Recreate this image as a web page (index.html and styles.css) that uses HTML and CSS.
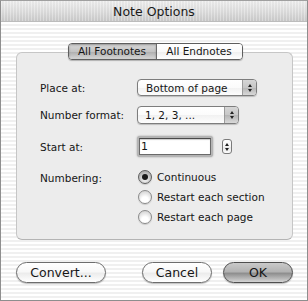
FILE: index.html
```html
<!DOCTYPE html>
<html>
<head>
<meta charset="utf-8">
<link rel="stylesheet" href="styles.css">
</head>
<body>
<div class="window">
  <div class="titlebar">Note Options</div>
  <div class="content">
    <div class="tabs">
      <div class="tab tab-on">All Footnotes</div>
      <div class="tab">All Endnotes</div>
    </div>
    <div class="group">
      <div class="row row1">
        <div class="label">Place at:</div>
        <div class="popup popup-wide"><span>Bottom of page</span><span class="arrows"><i class="up"></i><i class="down"></i></span></div>
      </div>
      <div class="row row2">
        <div class="label">Number format:</div>
        <div class="popup popup-narrow"><span>1, 2, 3, ...</span><span class="arrows"><i class="up"></i><i class="down"></i></span></div>
      </div>
      <div class="row row3">
        <div class="label">Start at:</div>
        <div class="field-wrap">
          <div class="focus"><div class="field">1</div></div>
          <div class="stepper"><i class="up"></i><i class="down"></i></div>
        </div>
      </div>
      <div class="row row4">
        <div class="label label-top">Numbering:</div>
        <div class="radios">
          <div class="radio-row"><span class="radio radio-on"></span>Continuous</div>
          <div class="radio-row"><span class="radio"></span>Restart each section</div>
          <div class="radio-row"><span class="radio"></span>Restart each page</div>
        </div>
      </div>
    </div>
    <div class="buttons">
      <div class="btn btn-convert">Convert...</div>
      <div class="spacer"></div>
      <div class="btn btn-cancel">Cancel</div>
      <div class="btn btn-ok">OK</div>
    </div>
  </div>
</div>
</body>
</html>
```
FILE: styles.css
```css
* { box-sizing: border-box; }
html, body { margin: 0; padding: 0; background: #fff; }
body { font-family: "DejaVu Sans", "Liberation Sans", sans-serif; color: #161616; }

.window {
  width: 308px;
  height: 301px;
  border: 1px solid #8e8e8e;
  border-top-color: #a0a0a0;
  display: flex;
  flex-direction: column;
  overflow: hidden;
}

.titlebar {
  height: 21px;
  flex: none;
  font-size: 12.5px;
  line-height: 21px;
  text-align: center;
  color: #1a1a1a;
  background:
    repeating-linear-gradient(90deg, rgba(255,255,255,0.25) 0 1px, rgba(0,0,0,0.02) 1px 3px),
    linear-gradient(#eeeeee, #dcdcdc 55%, #cbcbcb);
  border-bottom: 1px solid #bcbcbc;
}

.content {
  flex: 1;
  background: repeating-linear-gradient(#ffffff 0 2px, #f0f0f0 2px 4px);
  display: flex;
  flex-direction: column;
  padding: 21px 14px 0 15px;
}

.tabs {
  align-self: center;
  display: flex;
  height: 17px;
  border: 1px solid #5e5e5e;
  border-radius: 4px;
  position: relative;
  z-index: 1;
  box-shadow: 0 1px 1px rgba(0,0,0,0.25);
  overflow: hidden;
  margin-left: 1px;
}
.tab {
  font-size: 10.5px;
  line-height: 15px;
  padding: 0 6px;
  background: linear-gradient(#ffffff, #fafafa 50%, #eeeeee 51%, #ffffff);
}
.tab-on {
  width: 88px;
  text-align: center;
  border-right: 1px solid #6a6a6a;
  background: linear-gradient(#d8d8d8, #c4c4c4 50%, #adadad 51%, #d6d6d6);
  box-shadow: inset 0 1px 2px rgba(0,0,0,0.3);
}
.tab:not(.tab-on) { width: 85px; text-align: center; }

.group {
  margin-top: -8px;
  height: 188px;
  background: #ececec;
  border: 1px solid #c6c6c6;
  border-bottom-color: #b4b4b4;
  border-radius: 6px;
  padding: 26px 10px 0 23px;
  display: flex;
  flex-direction: column;
}

.row { display: flex; align-items: center; }
.row1 { height: 17px; }
.row2 { height: 18px; margin-top: 10px; }
.row3 { height: 21px; margin-top: 12px; }
.row4 { align-items: flex-start; margin-top: 10px; }

.label {
  width: 97px;
  font-size: 10.5px;
  flex: none;
}
.label-top { line-height: 20px; margin-top: 1px; }

.popup {
  height: 100%;
  display: flex;
  align-items: center;
  justify-content: space-between;
  border: 1px solid #7d7d7d;
  border-radius: 4px;
  background: linear-gradient(#ffffff, #fbfbfb 50%, #f1f1f1 51%, #fdfdfd);
  box-shadow: 0 1px 1px rgba(0,0,0,0.2);
  font-size: 10.5px;
  padding-left: 8px;
  overflow: hidden;
}
.popup-wide { width: 120px; }
.popup-narrow { width: 102px; padding-left: 7px; }
.arrows {
  width: 14px;
  height: 100%;
  border-left: 1px solid #9b9b9b;
  background: linear-gradient(#d6d6d6, #c7c7c7 50%, #b4b4b4 51%, #d9d9d9);
  display: flex;
  flex-direction: column;
  align-items: center;
  justify-content: center;
  gap: 2px;
}
.up, .down {
  display: block;
  width: 0; height: 0;
  border-left: 2.5px solid transparent;
  border-right: 2.5px solid transparent;
}
.up { border-bottom: 3px solid #222; }
.down { border-top: 3px solid #222; }

.field-wrap { display: flex; align-items: center; height: 100%; }
.focus {
  width: 76px;
  height: 21px;
  padding: 2px;
  border-radius: 3px;
  background: #b4b4b4;
  box-shadow: 0 0 2px #9a9a9a;
}
.field {
  height: 17px;
  background: #fff;
  border: 1px solid #6a6a6a;
  border-top-color: #4a4a4a;
  box-shadow: inset 0 1px 1px rgba(0,0,0,0.2);
  font-size: 11px;
  line-height: 15px;
  padding-left: 1px;
}
.stepper {
  margin-left: 9px;
  width: 10px;
  height: 15px;
  border: 1px solid #7a7a7a;
  border-radius: 3px;
  background: linear-gradient(#ffffff, #f4f4f4 50%, #e6e6e6 51%, #fbfbfb);
  display: flex;
  flex-direction: column;
  align-items: center;
  justify-content: center;
  gap: 2px;
}
.stepper .up { border-left-width: 2px; border-right-width: 2px; border-bottom-width: 3px; }
.stepper .down { border-left-width: 2px; border-right-width: 2px; border-top-width: 3px; }

.radios { display: flex; flex-direction: column; }
.radio-row {
  height: 20px;
  display: flex;
  align-items: center;
  font-size: 10.5px;
  margin-left: 1px;
}
.radio {
  width: 14px;
  height: 14px;
  border-radius: 50%;
  border: 1px solid #8a8a8a;
  background: radial-gradient(circle at 50% 75%, #ffffff 30%, #e6e6e6 60%, #c8c8c8 100%);
  margin-right: 5px;
  box-shadow: 0 1px 1px rgba(0,0,0,0.15);
  display: flex;
  align-items: center;
  justify-content: center;
}
.radio-on {
  border-color: #5e5e5e;
  background: radial-gradient(circle at 50% 70%, #e8e8e8 20%, #bdbdbd 60%, #9a9a9a 100%);
}
.radio-on::after {
  content: "";
  width: 6px;
  height: 6px;
  border-radius: 50%;
  background: #1a1a1a;
}

.buttons {
  display: flex;
  margin-top: 22px;
  padding-left: 0;
}
.spacer { flex: 1; }
.btn {
  height: 21px;
  border-radius: 11px;
  border: 1px solid #6d6d6d;
  font-size: 12.5px;
  line-height: 19px;
  text-align: center;
  background: linear-gradient(#ffffff, #f8f8f8 45%, #ececec 55%, #ffffff);
  box-shadow: 0 1px 1px rgba(0,0,0,0.25);
}
.btn-convert { width: 90px; }
.btn-cancel { width: 70px; margin-right: 11px; }
.btn-ok {
  width: 70px;
  border-color: #4e4e4e;
  background: linear-gradient(#c9c9c9, #b3b3b3 45%, #8f8f8f 55%, #d4d4d4);
}
```
